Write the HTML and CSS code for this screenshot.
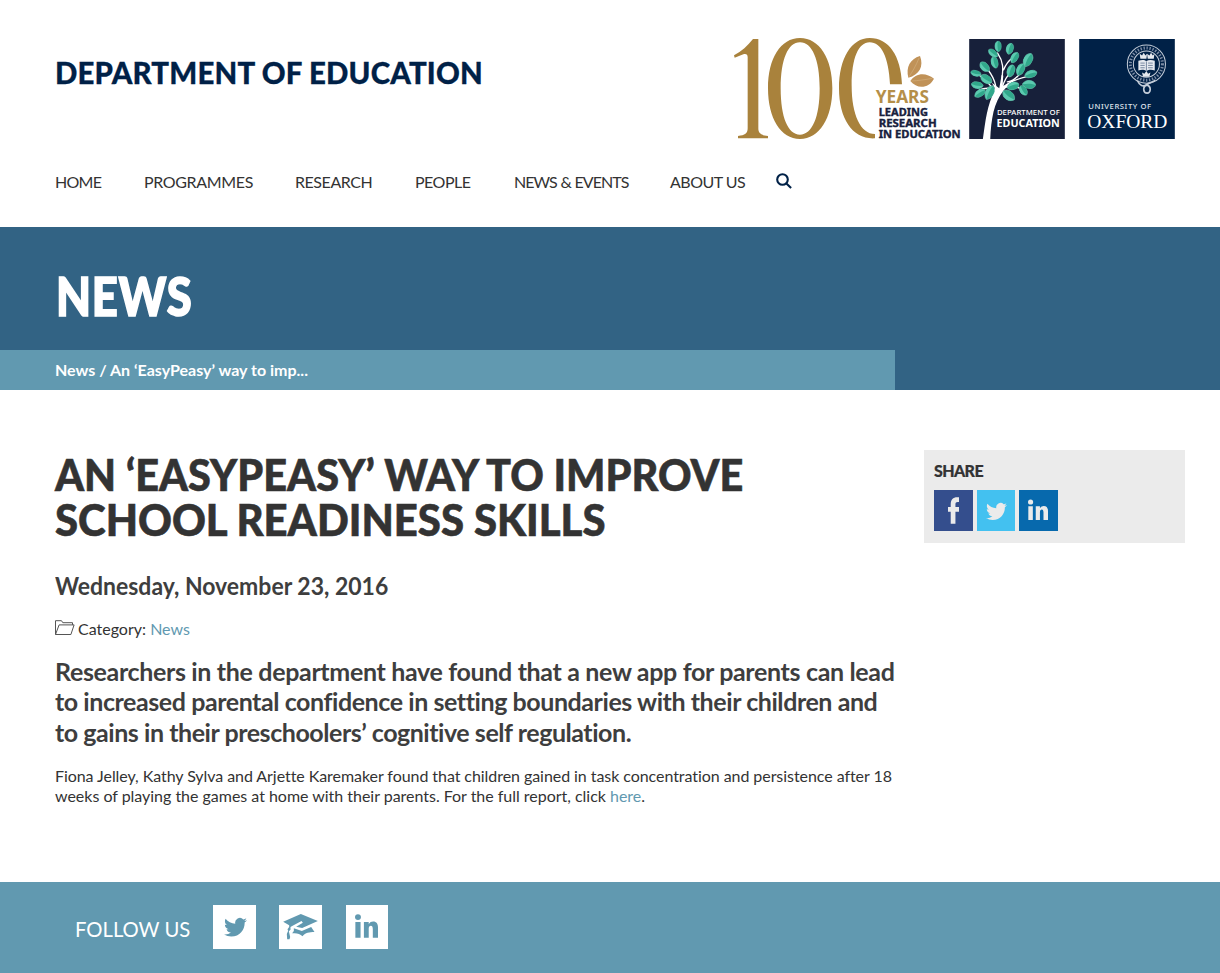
FILE: index.html
```html
<!DOCTYPE html>
<html lang="en">
<head>
<meta charset="utf-8">
<title>An ‘EasyPeasy’ way to improve school readiness skills</title>
<link rel="stylesheet" href="styles.css">
</head>
<body>
<svg class="defs" aria-hidden="true">
  <symbol id="bird" viewBox="0 2 24 20"><path d="M23.953 4.57a10 10 0 01-2.825.775 4.958 4.958 0 002.163-2.723c-.951.555-2.005.959-3.127 1.184a4.92 4.92 0 00-8.384 4.482C7.69 8.095 4.067 6.13 1.64 3.162a4.822 4.822 0 00-.666 2.475c0 1.71.87 3.213 2.188 4.096a4.904 4.904 0 01-2.228-.616v.06a4.923 4.923 0 003.946 4.827 4.996 4.996 0 01-2.212.085 4.936 4.936 0 004.604 3.417 9.867 9.867 0 01-6.102 2.105c-.39 0-.779-.023-1.17-.067a13.995 13.995 0 007.557 2.209c9.053 0 13.998-7.496 13.998-13.985 0-.21 0-.42-.015-.63A9.935 9.935 0 0024 4.59z"/></symbol>
  <symbol id="linkedin" viewBox="0 0 62 64"><circle cx="8" cy="8" r="8"/><path d="M1 21h14v43H1zM24 21h13v6c3-5 7-7 12-7 9 0 13 6 13 16v28H48V40c0-6-2-9-5-9-4 0-6 3-6 8v25H24z"/></symbol>
  <symbol id="leaf" viewBox="-10 -18 20 36" preserveAspectRatio="none"><path d="M0-18C13-11 14 8 1 18-13 9-14-10 0-18z"/><path d="M0-17C-3-5-2 6 1 17-13 8-13-9 0-17z" fill="#5ccab0" stroke="none"/></symbol>
</svg>
<header class="header">
  <div class="brand">
    <a class="site-name">DEPARTMENT OF EDUCATION</a>
    <svg class="centenary" viewBox="0 0 720 345">
      <g fill="#a9823c">
        <path d="M27 76C50 64 68 47 84 27h16v268c0 15 8 21 29 23v7H39v-7c21-2 29-8 29-23V82c0-9-5-11-13-9l-26 10z"/>
        <path fill-rule="evenodd" d="M225 24c58 0 97 61 97 151s-39 152-97 152-96-62-96-152 38-151 96-151zm0 13c-36 0-58 51-58 138s22 139 58 139 59-52 59-139-23-138-59-138z"/>
        <path d="M450 325c-66 4-108-57-108-150 0-90 37-151 92-151 57 0 94 53 97 139h-36c-4-82-26-126-61-126-34 0-54 48-54 130 0 87 27 145 70 145z"/>
        <path d="M550 143c-8-31 5-56 35-65 12 31-2 57-35 65zM556 153c16-25 47-27 71-7-15 29-50 33-71 7z" fill="#c09258"/>
        <path d="M552 140c12-18 21-33 30-56M559 153c20-1 42-4 63-8" fill="none" stroke="#d9b888" stroke-width="1.5"/>
      </g>
      <text class="logo-sans bold" x="452" y="218" font-size="52" textLength="160" lengthAdjust="spacingAndGlyphs" fill="#b58f49">YEARS</text>
      <g class="logo-sans bold" font-size="33" fill="#17203d" stroke="#17203d" stroke-width="1.2">
        <text x="461" y="259" textLength="148" lengthAdjust="spacingAndGlyphs">LEADING</text>
        <text x="461" y="291" textLength="174" lengthAdjust="spacingAndGlyphs">RESEARCH</text>
        <text x="461" y="323" textLength="246" lengthAdjust="spacingAndGlyphs">IN EDUCATION</text>
      </g>
    </svg>
    <svg class="tile" viewBox="28 26 286 299">
      <path d="M28 26h286v299H28z" fill="#17203a"/>
      <g fill="none" stroke="#fff" stroke-linecap="round">
        <path d="M113 190C95 170 82 150 55 132M107 165C103 145 95 132 84 118M126 178C120 140 142 110 113 68M131 118C137 103 145 91 158 82M126 175c5-22 16-41 31-54M124 174c24-22 50-30 82-37M128 172c28-7 49-6 70 11M109 178c-20-7-35-7-51 1M142 154c12-1 26-9 37-24" stroke-width="4"/>
      </g>
      <path d="M69 325C77 269 81 224 106 176L96 157l22 16 7-39 5 2-3 34 27-17-23 27C101 216 94 266 91 325z" fill="#fff"/>
      <g fill="#31a88b" stroke="#8ad2c4" stroke-width="1">
        <use href="#leaf" x="104" y="31" width="21" height="34"/>
        <use href="#leaf" x="138" y="37" width="23" height="36" transform="rotate(18 149 55)"/>
        <use href="#leaf" x="89" y="51" width="20" height="35" transform="rotate(-50 99 68)"/>
        <use href="#leaf" x="153" y="63" width="22" height="37" transform="rotate(32 164 81)"/>
        <use href="#leaf" x="61" y="91" width="24" height="38" transform="rotate(-42 73 108)"/>
        <use href="#leaf" x="93" y="77" width="22" height="38" transform="rotate(-12 104 96)"/>
        <use href="#leaf" x="141" y="101" width="24" height="40" transform="rotate(20 152 120)"/>
        <use href="#leaf" x="190" y="66" width="27" height="45" transform="rotate(28 203 89)"/>
        <use href="#leaf" x="169" y="97" width="24" height="40" transform="rotate(28 181 118)"/>
        <use href="#leaf" x="202" y="111" width="23" height="40" transform="rotate(75 213 130)"/>
        <use href="#leaf" x="194" y="141" width="26" height="42" transform="rotate(95 207 162)"/>
        <use href="#leaf" x="149" y="147" width="24" height="38" transform="rotate(75 160 165)"/>
        <use href="#leaf" x="179" y="163" width="22" height="35" transform="rotate(-30 189 180)"/>
        <use href="#leaf" x="132" y="173" width="28" height="44" transform="rotate(-50 146 195)"/>
        <use href="#leaf" x="39" y="112" width="19" height="34" transform="rotate(-75 48 129)"/>
        <use href="#leaf" x="66" y="127" width="25" height="40" transform="rotate(-55 78 146)"/>
        <use href="#leaf" x="42" y="146" width="22" height="38" transform="rotate(-80 52 165)"/>
        <use href="#leaf" x="49" y="169" width="22" height="38" transform="rotate(60 60 188)"/>
        <use href="#leaf" x="76" y="162" width="26" height="47" transform="rotate(28 88 186)"/>
      </g>
      <g class="logo-sans" fill="#fff">
        <text class="light" x="111" y="253" font-size="21" textLength="188" lengthAdjust="spacingAndGlyphs">DEPARTMENT OF</text>
        <text class="bold" x="110" y="290" font-size="33" textLength="189" lengthAdjust="spacingAndGlyphs">EDUCATION</text>
      </g>
    </svg>
    <svg class="tile tile-oxford" viewBox="28 26 286 299">
      <path d="M28 26h286v299H28z" fill="#002147"/>
      <g fill="none" stroke="#c3ccd8">
        <circle cx="229" cy="101" r="57" stroke-width="3"/>
        <circle cx="229" cy="101" r="48" stroke-width="9" stroke-dasharray="4 5" stroke="#7c8ca5"/>
        <circle cx="229" cy="101" r="39" stroke-width="3"/>
        <path d="M202 150c7 16 17 20 28 12 10-8 22-5 25-14M230 164c-14 5-10 24 1 24s14-19 0-24" stroke-width="5"/>
      </g>
      <path d="M205 91c10-4 19-3 24 1 6-4 15-5 25-1v29c-10-3-19-2-25 2-5-4-14-5-24-2zM211 85l-2-15 7 5 5-8 5 8 5-5-2 15zM233 85l-2-15 7 5 5-8 5 8 5-5-2 15zM219 139l-3-13 7 4 6-8 5 8 7-4-3 13z" fill="#e5e9ef"/>
      <path d="M211 98h13m-13 7h13m-13 7h13m10-14h14m-14 7h14m-14 7h14M229 93v28" stroke="#40587a" stroke-width="2"/>
      <text class="logo-sans light" x="55" y="236" font-size="23" fill="#dfe4ec" textLength="188">UNIVERSITY OF</text>
      <text class="logo-serif" x="52" y="292" font-size="54" fill="#fff" textLength="240" lengthAdjust="spacingAndGlyphs">OXFORD</text>
    </svg>
  </div>
  <nav class="nav">
    <a class="n1">HOME</a><a class="n2">PROGRAMMES</a><a class="n3">RESEARCH</a><a class="n4">PEOPLE</a><a class="n5">NEWS &amp; EVENTS</a><a class="n6">ABOUT US</a>
    <svg class="search" viewBox="0 0 16 16"><circle cx="6.5" cy="6.5" r="5.3"/><path d="M10.4 10.4l4.7 4.7"/></svg>
  </nav>
</header>
<section class="banner">
  <div class="banner-title">NEWS</div>
  <div class="crumbs"><span>News / An ‘EasyPeasy’ way to imp...</span></div>
</section>
<div class="content">
  <main class="article">
    <h1><span class="t1">AN ‘EASYPEASY’ WAY TO IMPROVE</span><span class="t2">SCHOOL READINESS SKILLS</span></h1>
    <p class="date">Wednesday, November 23, 2016</p>
    <p class="category"><svg class="folder" viewBox="0 0 20 16"><path d="M.5 14.5V.7h6l1.3 2h9.7v2.2M.5 14.5l3.6-9.6h15l-3.2 9.6z"/></svg><span>Category: <a>News</a></span></p>
    <p class="lead"><span class="l1">Researchers in the department have found that a new app for parents can lead</span><span class="l2">to increased parental confidence in setting boundaries with their children and</span><span class="l3">to gains in their preschoolers’ cognitive self regulation.</span></p>
    <p class="text"><span class="b1">Fiona Jelley, Kathy Sylva and Arjette Karemaker found that children gained in task concentration and persistence after 18</span><span class="b2">weeks of playing the games at home with their parents. For the full report, click <a>here</a>.</span></p>
  </main>
  <aside class="share">
    <h2>SHARE</h2>
    <div class="share-icons">
      <a class="fb"><svg viewBox="0 0 34 79"><path d="M8 79V43H0V29h8V21C8 7 15 0 27 0h7v14h-5c-5 0-7 2-7 7v8h12l-1 14H22v36z"/></svg></a>
      <a class="tw"><svg><use href="#bird"/></svg></a>
      <a class="li"><svg><use href="#linkedin"/></svg></a>
    </div>
  </aside>
</div>
<footer class="footer">
  <span class="follow">FOLLOW US</span>
  <a><svg class="f-bird"><use href="#bird"/></svg></a>
  <a><svg class="f-cap" viewBox="0 0 104 78"><path d="M0 23L53 0l51 21-47 21-18-4 20-12-4-5-28 15-5 3v8l-5 5 4 17-2 7h-7l-1-16 4-10-2-4 5-7v-5z"/><path d="M32 43l24 8 28-12 10 15c-16 0-27 2-36 13-8-8-18-11-31-9l5-7z"/></svg></a>
  <a><svg class="f-li"><use href="#linkedin"/></svg></a>
</footer>
</body>
</html>
```
FILE: styles.css
```css
* { box-sizing: border-box; }
body { margin: 0; background: #fff; color: #333; font-family: Lato, "Open Sans", sans-serif; font-size: 16px; font-variant-ligatures: none; }
h1, h2, p { margin: 0; }
svg { display: block; flex: none; }
.defs { position: absolute; width: 0; height: 0; }
.header { height: 227px; padding: 30px 35px 0 55px; }
.brand { display: flex; height: 115px; }
.site-name { flex: none; width: 670px; padding: 23px 0 0 0; font-size: 31px; line-height: 38px; font-weight: 900; color: #002147; letter-spacing: 0.2px; white-space: nowrap; -webkit-text-stroke: 0.3px; transform: scaleX(0.948); transform-origin: 0 0; }
.centenary { width: 240px; height: 115px; }
.tile { width: 96px; height: 100px; margin: 8.5px 0 0 4px; }
.tile-oxford { margin-left: 14px; }
.logo-sans { font-family: "Noto Sans", "Open Sans", sans-serif; }
.bold { font-weight: 700; }
.light { font-weight: 500; }
.logo-serif { font-family: "Liberation Serif", serif; }
.nav { display: flex; align-items: center; margin-top: 24px; height: 24px; white-space: nowrap; }
.nav a { flex: none; }
.n1 { width: 89px; letter-spacing: -0.75px; }
.n2 { width: 151px; letter-spacing: -0.35px; }
.n3 { width: 120px; letter-spacing: -0.45px; }
.n4 { width: 99px; letter-spacing: -0.5px; }
.n5 { width: 156px; letter-spacing: -0.95px; word-spacing: 0.5px; }
.n6 { width: 106px; letter-spacing: -0.5px; }
.search { width: 16px; height: 16px; fill: none; stroke: #002147; stroke-width: 2.1; }
.banner { height: 163px; background: #326384; color: #fff; display: flex; flex-direction: column; }
.banner-title { height: 123px; padding: 37px 0 0 56px; font-size: 53px; line-height: 64px; font-weight: 900; letter-spacing: 0.8px; transform: scaleX(0.855); transform-origin: 56px 0; -webkit-text-stroke: 1.6px; }
.crumbs { width: 895px; height: 40px; padding-left: 55px; line-height: 40px; background: #6199b0; font-weight: 700; white-space: nowrap; }
.content { display: flex; height: 492px; padding: 60px 35px 0 55px; align-items: flex-start; }
.article { width: 869px; flex: none; }
.article span { white-space: nowrap; }
h1 { padding-top: 2px; font-size: 44px; line-height: 45px; font-weight: 900; -webkit-text-stroke: 0.6px; }
h1 span, .lead span, .text span { display: block; }
.t1, .t2, .date { transform-origin: 0 0; }
.t1 { transform: scaleX(0.941); }
.t2 { transform: scaleX(0.951); }
.date { margin-top: 29px; font-size: 24px; line-height: 30px; font-weight: 700; color: #3e3e3e; transform: scaleX(0.957); }
.category { display: flex; margin-top: 16px; line-height: 24px; gap: 3px; }
.category a, .text a { color: #6199b0; }
.folder { width: 20px; height: 16px; margin-top: 3px; fill: none; stroke: #555; stroke-width: 1; }
.lead { margin-top: 15px; font-size: 25px; line-height: 30.3px; font-weight: 700; color: #3e3e3e; }
.l1 { letter-spacing: -0.34px; }
.l2 { letter-spacing: -0.43px; }
.l3 { letter-spacing: -0.45px; }
.text { margin-top: 19px; line-height: 20px; }
.b1 { letter-spacing: -0.06px; }
.b2 { letter-spacing: -0.02px; }
.share { width: 261px; height: 93px; background: #ebebeb; padding: 10px; }
h2 { font-size: 16px; line-height: 21px; font-weight: 900; letter-spacing: -0.6px; -webkit-text-stroke: 0.2px; }
.share-icons { display: flex; gap: 4px; margin-top: 9px; fill: #ebebeb; }
.share-icons a { display: flex; width: 38.5px; height: 41px; align-items: center; justify-content: center; }
.fb { background: #344e8d; }
.fb svg { width: 11.5px; height: 27px; }
.tw { background: #43c1f0; }
.tw svg { width: 21px; height: 19px; margin: 2px 0 0 2px; }
.li { background: #0769ad; }
.li svg { width: 20px; height: 21.5px; margin-top: -1px; }
.footer { height: 91px; padding: 22.5px 0 0 75px; display: flex; background: #6199b0; color: #fff; }
.follow { width: 115px; line-height: 47px; font-size: 22px; white-space: nowrap; transform: scaleX(0.92); transform-origin: 0 0; }
.footer a { width: 42.7px; height: 44px; margin-left: 23.4px; background: #fff; display: flex; align-items: center; justify-content: center; fill: #6199b0; }
.f-bird { width: 23px; height: 20.5px; margin: 2px 0 0 2px; }
.f-cap { width: 35px; height: 26px; }
.f-li { width: 23px; height: 24px; margin-top: -1px; }
```
